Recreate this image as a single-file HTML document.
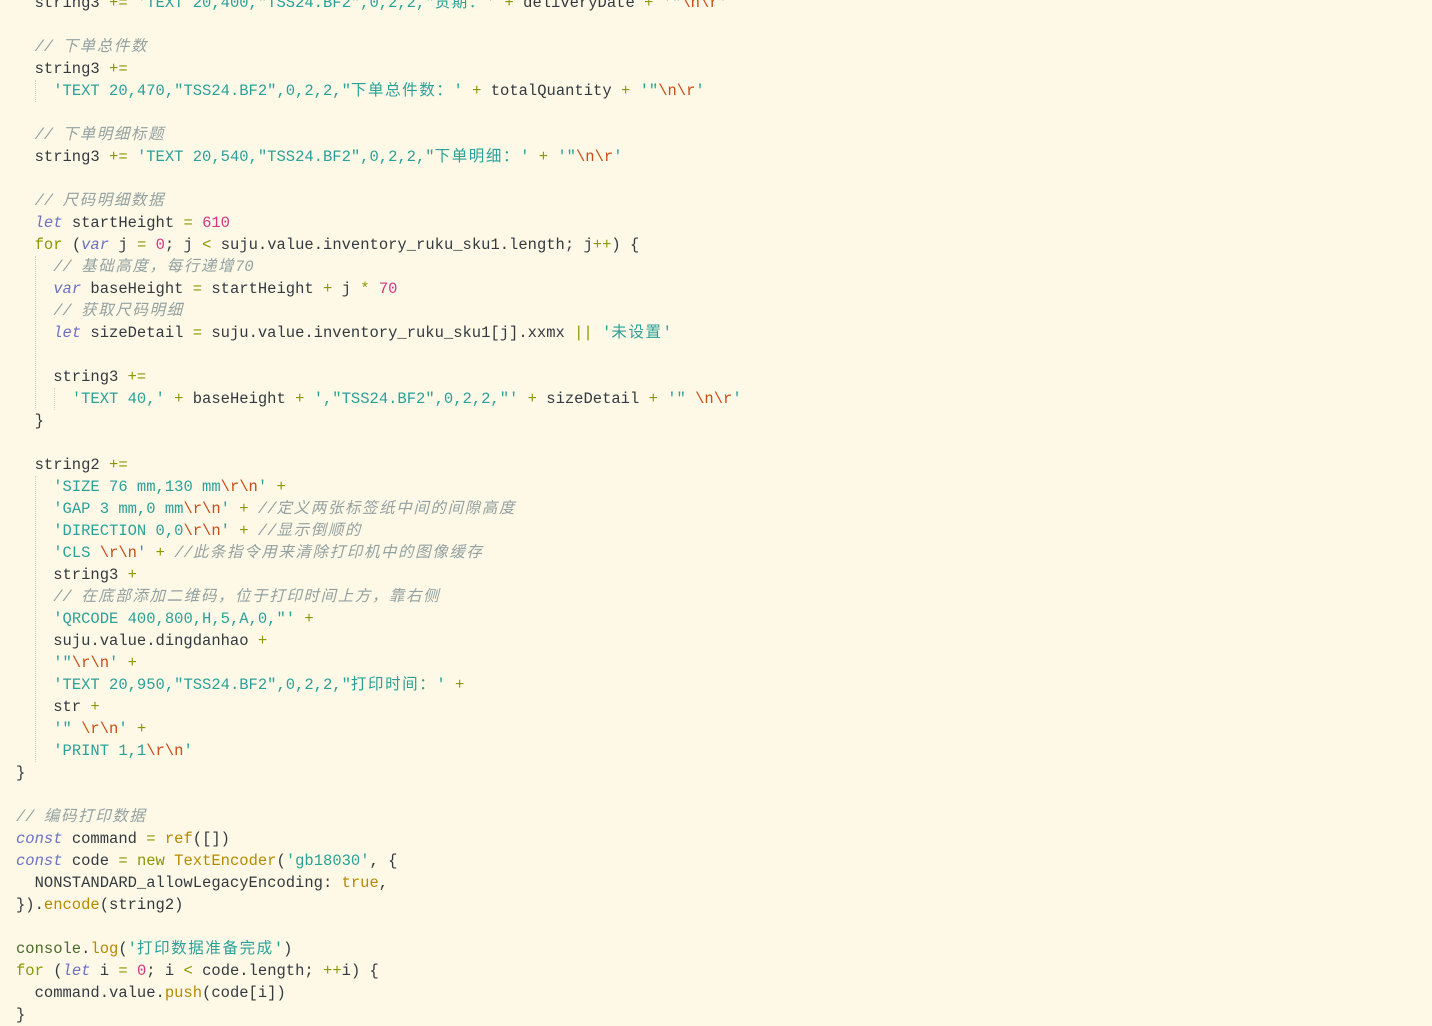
<!DOCTYPE html>
<html><head><meta charset="utf-8"><style>
html,body{margin:0;padding:0;background:#fef9e7;width:1432px;height:1015px;overflow:hidden}
pre{margin:0;position:absolute;left:16px;top:-8px;font-family:"Liberation Mono","Noto Sans CJK SC",monospace;font-size:15.5px;line-height:22px;color:#333a3f;white-space:pre}
.o{color:#859900}.s{color:#2aa198}.e{color:#cb4b16}.n{color:#d33682}
.k{color:#6c71c4;font-style:italic}.f{color:#859900}.c{color:#93a1a1;font-style:italic}
.m{color:#b58900}.g{color:#4b6b28}
.z{letter-spacing:1.6px;font-family:"Noto Sans CJK SC",sans-serif;line-height:0}
.gd{position:absolute;width:0;border-left:1px dotted #d8d2bd}
</style></head><body>
<div class="gd" style="left:35px;top:80px;height:22px"></div>
<div class="gd" style="left:35px;top:256px;height:154px"></div>
<div class="gd" style="left:54px;top:388px;height:22px"></div>
<div class="gd" style="left:35px;top:476px;height:286px"></div>
<pre>  string3 <span class="o">+=</span> <span class="s">'TEXT 20,400,"TSS24.BF2",0,2,2,"<span class="z">货期：</span>'</span> <span class="o">+</span> deliveryDate <span class="o">+</span> <span class="s">'"<span class="e">\n\r</span>'</span>

  <span class="c">// <span class="z">下单总件数</span></span>
  string3 <span class="o">+=</span>
    <span class="s">'TEXT 20,470,"TSS24.BF2",0,2,2,"<span class="z">下单总件数：</span>'</span> <span class="o">+</span> totalQuantity <span class="o">+</span> <span class="s">'"<span class="e">\n\r</span>'</span>

  <span class="c">// <span class="z">下单明细标题</span></span>
  string3 <span class="o">+=</span> <span class="s">'TEXT 20,540,"TSS24.BF2",0,2,2,"<span class="z">下单明细：</span>'</span> <span class="o">+</span> <span class="s">'"<span class="e">\n\r</span>'</span>

  <span class="c">// <span class="z">尺码明细数据</span></span>
  <span class="k">let</span> startHeight <span class="o">=</span> <span class="n">610</span>
  <span class="f">for</span> (<span class="k">var</span> j <span class="o">=</span> <span class="n">0</span>; j <span class="o">&lt;</span> suju.value.inventory_ruku_sku1.length; j<span class="o">++</span>) {
    <span class="c">// <span class="z">基础高度，每行递增</span>70</span>
    <span class="k">var</span> baseHeight <span class="o">=</span> startHeight <span class="o">+</span> j <span class="o">*</span> <span class="n">70</span>
    <span class="c">// <span class="z">获取尺码明细</span></span>
    <span class="k">let</span> sizeDetail <span class="o">=</span> suju.value.inventory_ruku_sku1[j].xxmx <span class="o">||</span> <span class="s">'<span class="z">未设置</span>'</span>

    string3 <span class="o">+=</span>
      <span class="s">'TEXT 40,'</span> <span class="o">+</span> baseHeight <span class="o">+</span> <span class="s">',"TSS24.BF2",0,2,2,"'</span> <span class="o">+</span> sizeDetail <span class="o">+</span> <span class="s">'" <span class="e">\n\r</span>'</span>
  }

  string2 <span class="o">+=</span>
    <span class="s">'SIZE 76 mm,130 mm<span class="e">\r\n</span>'</span> <span class="o">+</span>
    <span class="s">'GAP 3 mm,0 mm<span class="e">\r\n</span>'</span> <span class="o">+</span> <span class="c">//<span class="z">定义两张标签纸中间的间隙高度</span></span>
    <span class="s">'DIRECTION 0,0<span class="e">\r\n</span>'</span> <span class="o">+</span> <span class="c">//<span class="z">显示倒顺的</span></span>
    <span class="s">'CLS <span class="e">\r\n</span>'</span> <span class="o">+</span> <span class="c">//<span class="z">此条指令用来清除打印机中的图像缓存</span></span>
    string3 <span class="o">+</span>
    <span class="c">// <span class="z">在底部添加二维码，位于打印时间上方，靠右侧</span></span>
    <span class="s">'QRCODE 400,800,H,5,A,0,"'</span> <span class="o">+</span>
    suju.value.dingdanhao <span class="o">+</span>
    <span class="s">'"<span class="e">\r\n</span>'</span> <span class="o">+</span>
    <span class="s">'TEXT 20,950,"TSS24.BF2",0,2,2,"<span class="z">打印时间：</span>'</span> <span class="o">+</span>
    str <span class="o">+</span>
    <span class="s">'" <span class="e">\r\n</span>'</span> <span class="o">+</span>
    <span class="s">'PRINT 1,1<span class="e">\r\n</span>'</span>
}

<span class="c">// <span class="z">编码打印数据</span></span>
<span class="k">const</span> command <span class="o">=</span> <span class="m">ref</span>([])
<span class="k">const</span> code <span class="o">=</span> <span class="f">new</span> <span class="m">TextEncoder</span>(<span class="s">'gb18030'</span>, {
  NONSTANDARD_allowLegacyEncoding: <span class="m">true</span>,
}).<span class="m">encode</span>(string2)

<span class="g">console</span>.<span class="m">log</span>(<span class="s">'<span class="z">打印数据准备完成</span>'</span>)
<span class="f">for</span> (<span class="k">let</span> i <span class="o">=</span> <span class="n">0</span>; i <span class="o">&lt;</span> code.length; <span class="o">++</span>i) {
  command.value.<span class="m">push</span>(code[i])
}
</pre>
</body></html>
